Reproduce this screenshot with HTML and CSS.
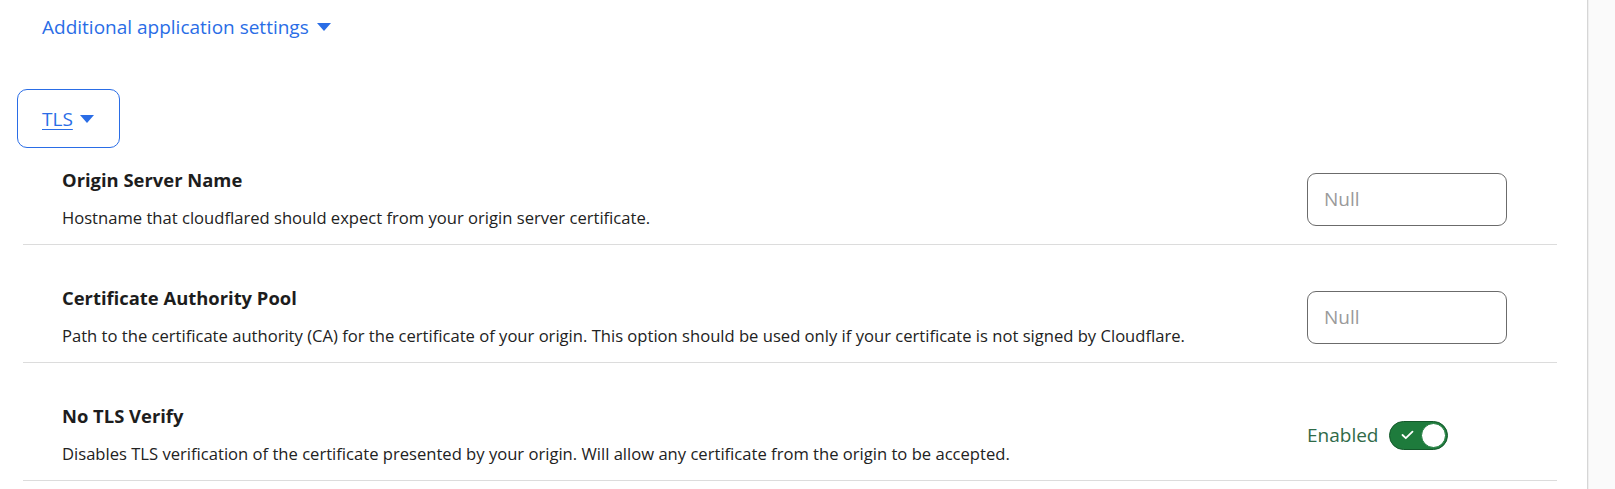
FILE: index.html
```html
<!DOCTYPE html>
<html lang="en">
<head>
<meta charset="utf-8">
<title>TLS settings</title>
<link rel="stylesheet" href="styles.css">
</head>
<body>
<div class="page">
  <main class="main">
    <a class="disclosure" href="#">Additional application settings <span class="caret"></span></a>
    <div class="section">
      <button class="tls-btn" type="button"><span class="tls-label">TLS</span><span class="caret"></span></button>
      <div class="rows">
        <div class="row first">
          <div class="info">
            <div class="title">Origin Server Name</div>
            <div class="desc">Hostname that cloudflared should expect from your origin server certificate.</div>
          </div>
          <div class="control"><input class="field" type="text" placeholder="Null"></div>
        </div>
        <div class="row">
          <div class="info">
            <div class="title">Certificate Authority Pool</div>
            <div class="desc">Path to the certificate authority (CA) for the certificate of your origin. This option should be used only if your certificate is not signed by Cloudflare.</div>
          </div>
          <div class="control"><input class="field" type="text" placeholder="Null"></div>
        </div>
        <div class="row">
          <div class="info">
            <div class="title">No TLS Verify</div>
            <div class="desc">Disables TLS verification of the certificate presented by your origin. Will allow any certificate from the origin to be accepted.</div>
          </div>
          <div class="control toggle-wrap">
            <span class="toggle-text">Enabled</span>
            <span class="toggle">
              <svg class="check" width="13" height="10" viewBox="0 0 13 10"><path d="M1.5 5 L4.8 8.2 L11.5 1.6" fill="none" stroke="#fff" stroke-width="1.8" stroke-linecap="round" stroke-linejoin="round"/></svg>
              <span class="knob"></span>
            </span>
          </div>
        </div>
      </div>
    </div>
  </main>
  <aside class="side"></aside>
</div>
</body>
</html>
```
FILE: styles.css
```css
* { box-sizing: border-box; }
html, body { margin: 0; padding: 0; }
body {
  font-family: "Open Sans", "Noto Sans", sans-serif;
  color: #1f1f1f;
  background: #fff;
}
.page {
  display: flex;
  height: 489px;
  overflow: hidden;
}
.main {
  width: 1587px;
  flex: none;
  padding-top: 15px;
}
.side {
  flex: 1;
  border-left: 1px solid #d6d6d6;
  background: #fafafa;
  box-shadow: inset 1px 0 0 #efefef;
}
.disclosure {
  display: inline-flex;
  align-items: center;
  gap: 8px;
  margin-left: 42px;
  font-size: 19px;
  line-height: 24px;
  color: #2a6de6;
  text-decoration: none;
}
.caret {
  display: inline-block;
  width: 0;
  height: 0;
  border-left: 7px solid transparent;
  border-right: 7px solid transparent;
  border-top: 8px solid #2a6de6;
}
.section {
  margin-top: 50px;
  margin-left: 17px;
}
.tls-btn {
  display: flex;
  align-items: center;
  gap: 7px;
  width: 103px;
  height: 59px;
  padding: 0 0 0 24px;
  border: 1px solid #2a6de6;
  border-radius: 10px;
  background: #fff;
  font-family: inherit;
  font-size: 19px;
  color: #2a6de6;
  cursor: pointer;
}
.tls-label { text-decoration: underline; text-underline-offset: 3px; }
.rows {
  margin-left: 6px;
  width: 1534px;
}
.row {
  display: flex;
  align-items: center;
  justify-content: space-between;
  padding: 41px 50px 14px 39px;
  border-bottom: 1px solid #dcdcdc;
}
.row.first { padding-top: 20px; }
.info { min-width: 0; }
.title {
  font-size: 18.4px;
  line-height: 24px;
  font-weight: 700;
  color: #1d1d1d;
  margin-bottom: 14px;
}
.desc {
  font-size: 16.6px;
  line-height: 24px;
  color: #222;
}
.control {
  width: 200px;
  flex: none;
}
.field {
  width: 200px;
  height: 53px;
  border: 1px solid #6b6b6b;
  border-radius: 9px;
  padding: 0 16px;
  font-family: inherit;
  font-size: 19px;
  color: #222;
  outline: none;
}
.field::placeholder { color: #9a9a9a; }
.toggle-wrap {
  display: flex;
  align-items: center;
  gap: 11px;
}
.toggle-text {
  font-size: 19px;
  color: #2f6a48;
}
.toggle {
  display: flex;
  align-items: center;
  justify-content: space-between;
  width: 59px;
  height: 29px;
  padding: 0 1px 0 11px;
  border-radius: 15px;
  background: #1e7b3c;
  border: 1px solid #14592b;
}
.knob {
  width: 25px;
  height: 25px;
  border-radius: 50%;
  background: #fff;
  border: 1px solid #1e7b3c;
}
```
